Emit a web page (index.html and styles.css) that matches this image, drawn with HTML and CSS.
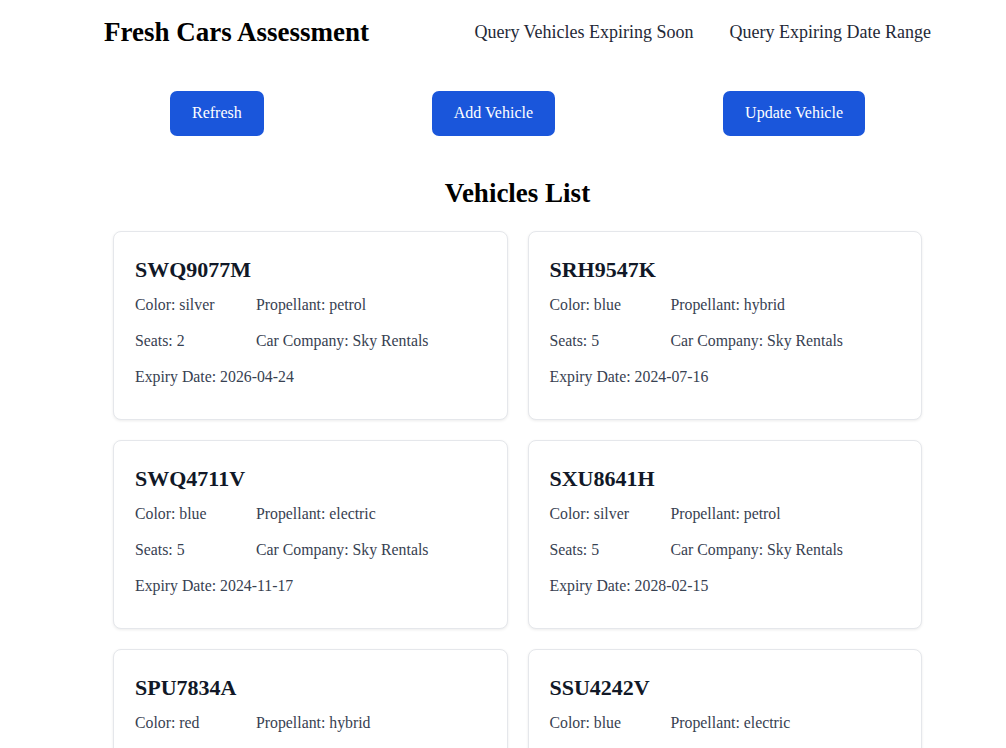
FILE: index.html
```html
<!DOCTYPE html>
<html lang="en">
<head>
<meta charset="utf-8">
<title>Fresh Cars Assessment</title>
<link rel="stylesheet" href="styles.css">
</head>
<body>
<div class="page">
  <header class="header">
    <h1 class="brand">Fresh Cars Assessment</h1>
    <nav class="nav">
      <a class="nav-link" href="#">Query Vehicles Expiring Soon</a>
      <a class="nav-link" href="#">Query Expiring Date Range</a>
    </nav>
  </header>

  <div class="actions">
    <button class="btn">Refresh</button>
    <button class="btn">Add Vehicle</button>
    <button class="btn">Update Vehicle</button>
  </div>

  <h2 class="section-title">Vehicles List</h2>

  <div class="grid">
    <div class="card">
      <h3 class="plate">SWQ9077M</h3>
      <div class="details">
        <span>Color: silver</span><span>Propellant: petrol</span>
        <span>Seats: 2</span><span>Car Company: Sky Rentals</span>
        <span class="full">Expiry Date: 2026-04-24</span>
      </div>
    </div>
    <div class="card">
      <h3 class="plate">SRH9547K</h3>
      <div class="details">
        <span>Color: blue</span><span>Propellant: hybrid</span>
        <span>Seats: 5</span><span>Car Company: Sky Rentals</span>
        <span class="full">Expiry Date: 2024-07-16</span>
      </div>
    </div>
    <div class="card">
      <h3 class="plate">SWQ4711V</h3>
      <div class="details">
        <span>Color: blue</span><span>Propellant: electric</span>
        <span>Seats: 5</span><span>Car Company: Sky Rentals</span>
        <span class="full">Expiry Date: 2024-11-17</span>
      </div>
    </div>
    <div class="card">
      <h3 class="plate">SXU8641H</h3>
      <div class="details">
        <span>Color: silver</span><span>Propellant: petrol</span>
        <span>Seats: 5</span><span>Car Company: Sky Rentals</span>
        <span class="full">Expiry Date: 2028-02-15</span>
      </div>
    </div>
    <div class="card">
      <h3 class="plate">SPU7834A</h3>
      <div class="details">
        <span>Color: red</span><span>Propellant: hybrid</span>
        <span>Seats: 5</span><span>Car Company: Sky Rentals</span>
        <span class="full">Expiry Date: 2025-09-30</span>
      </div>
    </div>
    <div class="card">
      <h3 class="plate">SSU4242V</h3>
      <div class="details">
        <span>Color: blue</span><span>Propellant: electric</span>
        <span>Seats: 5</span><span>Car Company: Sky Rentals</span>
        <span class="full">Expiry Date: 2027-03-12</span>
      </div>
    </div>
  </div>
</div>
</body>
</html>
```

FILE: styles.css
```css
* { box-sizing: border-box; }

html, body {
  margin: 0;
  padding: 0;
  background: #ffffff;
  font-family: "Liberation Serif", "Times New Roman", serif;
  color: #111827;
}

.page {
  padding-left: 29px;
}

.header {
  display: flex;
  justify-content: space-between;
  align-items: center;
  padding: 0 75px;
  height: 64px;
}

.brand {
  margin: 0;
  font-size: 27px;
  font-weight: bold;
  color: #000000;
  line-height: 30px;
}

.nav {
  display: flex;
  gap: 36px;
}

.nav-link {
  font-size: 18px;
  color: #1f2937;
  text-decoration: none;
  line-height: 20px;
}

.actions {
  display: flex;
  justify-content: space-around;
  padding: 0 57px;
  margin-top: 27px;
}

.btn {
  font-family: "Liberation Serif", "Times New Roman", serif;
  font-size: 16px;
  line-height: 19px;
  padding: 12px 22px 14px;
  color: #ffffff;
  background: #1a56db;
  border: none;
  border-radius: 7px;
  cursor: pointer;
}

.section-title {
  text-align: center;
  margin: 42px 0 0;
  font-size: 27px;
  font-weight: bold;
  color: #000000;
  line-height: 30px;
}

.grid {
  display: grid;
  grid-template-columns: 1fr 1fr;
  gap: 20px;
  padding: 0 84px;
  margin-top: 23px;
}

.card {
  background: #ffffff;
  border: 1px solid #e5e7eb;
  border-radius: 8px;
  box-shadow: 0 1px 3px rgba(0, 0, 0, 0.08);
  padding: 25px 21px 33px;
  height: 189px;
}

.plate {
  margin: 0;
  font-size: 22px;
  line-height: 25px;
  font-weight: bold;
  color: #111827;
}

.details {
  display: grid;
  grid-template-columns: 121px auto;
  row-gap: 16px;
  margin-top: 13px;
  font-size: 15.8px;
  line-height: 20px;
  color: #374151;
}

.details .full {
  grid-column: 1 / -1;
}
```
